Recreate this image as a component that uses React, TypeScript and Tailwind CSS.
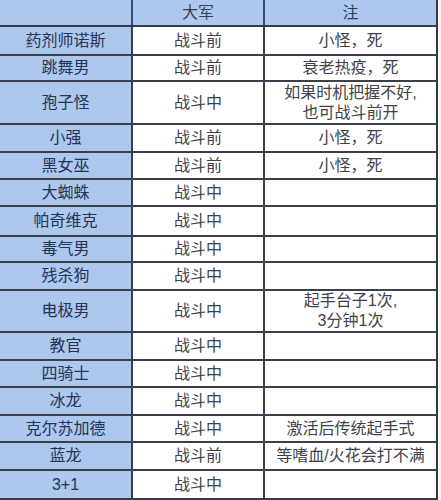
import React from 'react';

type Row = { name: string; army: string; note?: string[]; h: number };

const ROWS: Row[] = [
  { name: '药剂师诺斯', army: '战斗前', note: ['小怪，死'], h: 29 },
  { name: '跳舞男', army: '战斗前', note: ['衰老热疫，死'], h: 26 },
  { name: '孢子怪', army: '战斗中', note: ['如果时机把握不好,', '也可战斗前开'], h: 43 },
  { name: '小强', army: '战斗前', note: ['小怪，死'], h: 28 },
  { name: '黑女巫', army: '战斗前', note: ['小怪，死'], h: 27 },
  { name: '大蜘蛛', army: '战斗中', h: 27 },
  { name: '帕奇维克', army: '战斗中', h: 30 },
  { name: '毒气男', army: '战斗中', h: 26 },
  { name: '残杀狗', army: '战斗中', h: 28 },
  { name: '电极男', army: '战斗中', note: ['起手台子1次,', '3分钟1次'], h: 42 },
  { name: '教官', army: '战斗中', h: 28 },
  { name: '四骑士', army: '战斗中', h: 27 },
  { name: '冰龙', army: '战斗中', h: 28 },
  { name: '克尔苏加德', army: '战斗中', note: ['激活后传统起手式'], h: 27 },
  { name: '蓝龙', army: '战斗前', note: ['等嗜血/火花会打不满'], h: 28 },
  { name: '3+1', army: '战斗中', h: 27 },
];

const font = { fontFamily: '"Liberation Sans", "Noto Sans CJK SC", sans-serif' };

export default function App() {
  return (
    <div className="w-[441px] h-[500px] bg-[#f7f8fa] overflow-hidden" style={font}>
      <div className="w-[438px] border-r-2 border-b-2 border-[#363b47] text-[16px] leading-[20px]">
        <div className="flex h-[27px] bg-[#adc7ed] border-b-2 border-[#2f3a52]">
          <div className="w-[133px] border-r-2 border-[#3d4a66]" />
          <div className="w-[132px] flex items-center justify-center text-[#3a3f4a] border-r-2 border-[#3d4a66]">
            大军
          </div>
          <div className="flex-1 flex items-center justify-center text-[#2c3a5c]">注</div>
        </div>
        {ROWS.map((r, i) => (
          <div
            key={r.name}
            className={i === ROWS.length - 1 ? 'flex' : 'flex border-b-2 border-[#3b3f48]'}
            style={{ height: r.h }}
          >
            <div className="w-[133px] bg-[#adc7ed] border-r-2 border-[#363d52] flex items-center justify-center text-[#243356]">
              {r.name}
            </div>
            <div className="w-[132px] bg-white border-r-2 border-[#3b3f48] flex items-center justify-center text-[#3f4249]">
              {r.army}
            </div>
            <div className="flex-1 bg-white flex flex-col items-center justify-center text-[#3f4249]">
              {r.note?.map((n) => (
                <span key={n}>{n}</span>
              ))}
            </div>
          </div>
        ))}
      </div>
    </div>
  );
}
